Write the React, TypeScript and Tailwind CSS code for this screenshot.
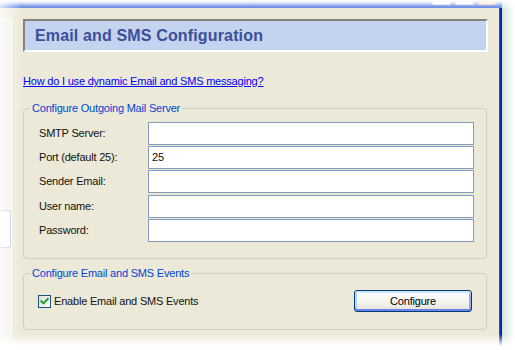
import React from "react";

function CheckBox() {
  return (
    <svg width="13" height="13" viewBox="0 0 13 13" className="shrink-0">
      <defs>
        <linearGradient id="cbg" x1="0" y1="0" x2="1" y2="1">
          <stop offset="0" stopColor="#DCDCD7" />
          <stop offset="1" stopColor="#FFFFFF" />
        </linearGradient>
      </defs>
      <rect x="0.5" y="0.5" width="12" height="12" fill="url(#cbg)" stroke="#1C5180" />
      <polyline points="3.3,6.2 5.4,8.4 9.8,3.9" fill="none" stroke="#21A121" strokeWidth="1.9" strokeLinecap="square" />
    </svg>
  );
}

function Row({ label, value, extra }: { label: string; value?: string; extra?: boolean }) {
  return (
    <div className={`flex items-center h-[23px] ${extra ? "mt-[1px]" : ""}`}>
      <span className="w-[109px] shrink-0">{label}</span>
      <div className="flex-1 h-full bg-white border border-[#7F9DB9] flex items-center pl-[3px]">
        {value}
      </div>
    </div>
  );
}

export default function App() {
  return (
    <div className="relative w-[515px] h-[350px] overflow-hidden bg-white font-['Liberation_Sans',Arial,sans-serif] text-[11px] tracking-[-0.2px] text-[#111]">
      <div className="flex flex-col h-full">
        {/* title bar remnant */}
        <div className="flex h-[8px] shrink-0">
          <div className="w-[502px] h-full bg-[linear-gradient(to_bottom,#e3eafb,#97b0ec_55%,#6a8ae3)] flex justify-end items-start pr-[6px] gap-[4px]">
            <div className="w-[19px] h-[5px] rounded-b-[2px] bg-[#f8f9fd] border-x border-b border-[#dde4f6]" />
            <div className="w-[19px] h-[5px] rounded-b-[2px] bg-[#f8f9fd] border-x border-b border-[#dde4f6]" />
            <div className="w-[18px] h-[5px] rounded-b-[2px] bg-[#f9e6e0] border-x border-b border-[#f0ccc2]" />
          </div>
          <div className="flex-1 bg-[linear-gradient(to_right,#e2eee3,#ffffff)]" />
        </div>

        <div className="flex flex-1">
          <div className="w-[499px] bg-[#ECE9D8] flex">
            {/* left strip */}
            <div className="w-[12px] flex flex-col shrink-0">
              <div className="h-[11px] shrink-0" />
              <div className="flex-1 bg-[#F2F0E8] border-t border-r border-[#FCFBF7]">
                <div className="mt-[190px] w-[11px] h-[38px] bg-white border-y border-r border-[#A8BBD6] rounded-r-[3px]" />
              </div>
            </div>

            {/* main content */}
            <div className="w-[487px] px-[11px] pt-[11px] flex flex-col">
              <div className="h-[33px] border-2 border-t-[#85837a] border-l-[#85837a] border-b-white border-r-white bg-[#C4D3F0] flex items-center pl-[10px]">
                <span className="text-[16px] font-bold text-[#3a4f98] tracking-[0.15px]">
                  Email and SMS Configuration
                </span>
              </div>

              <a className="mt-[23px] self-start leading-[13px] text-[#0000FF] underline">
                How do I use dynamic Email and SMS messaging?
              </a>

              <fieldset className="mt-[14px] w-[464px] border border-[#D0D0BF] rounded-[4px] p-0 m-0">
                <legend className="ml-[6px] px-[2px] leading-[13px] text-[#0046D5]">
                  Configure Outgoing Mail Server
                </legend>
                <div className="pl-[15px] pr-[12px] pt-[7px] pb-[16px] flex flex-col gap-[1px]">
                  <Row label="SMTP Server:" />
                  <Row label="Port (default 25):" value="25" />
                  <Row label="Sender Email:" />
                  <Row label="User name:" extra />
                  <Row label="Password:" />
                </div>
              </fieldset>

              <fieldset className="mt-[8px] w-[464px] border border-[#D0D0BF] rounded-[4px] p-0 m-0">
                <legend className="ml-[6px] px-[2px] leading-[13px] text-[#0046D5]">
                  Configure Email and SMS Events
                </legend>
                <div className="pl-[14px] pr-[14px] pt-[10px] pb-[17px] flex items-center justify-between">
                  <label className="flex items-center gap-[3px]">
                    <CheckBox />
                    <span>Enable Email and SMS Events</span>
                  </label>
                  <button className="w-[118px] h-[22px] rounded-[3px] border border-[#003C74] bg-[linear-gradient(to_bottom,#ffffff,#f0f0ea_70%,#dcdcd2)] shadow-[inset_0_2px_0_#CEE7FF,inset_0_-2px_0_#6982EE,inset_2px_0_0_#B9D2F7,inset_-2px_0_0_#89ADE4] text-black flex items-center justify-center">
                    Configure
                  </button>
                </div>
              </fieldset>
            </div>
          </div>
          {/* blue window border */}
          <div className="w-[3px] bg-[linear-gradient(to_right,#3a5fe0,#0a24c4,#0018b8)]" />
          {/* shadow */}
          <div className="flex-1 bg-[linear-gradient(to_right,#d3e5d5,#ffffff)]" />
        </div>
      </div>

      {/* faded edges */}
      <div className="pointer-events-none absolute left-0 top-0 w-full h-[6px] bg-[linear-gradient(to_bottom,#ffffff,rgba(255,255,255,0))]" />
      <div className="pointer-events-none absolute left-0 top-0 w-[22px] h-full bg-[linear-gradient(to_right,rgba(255,255,255,0.75),rgba(255,255,255,0))]" />
      <div className="pointer-events-none absolute left-0 bottom-0 w-full h-[16px] bg-[linear-gradient(to_bottom,rgba(255,255,255,0),#ffffff_75%)]" />
    </div>
  );
}
